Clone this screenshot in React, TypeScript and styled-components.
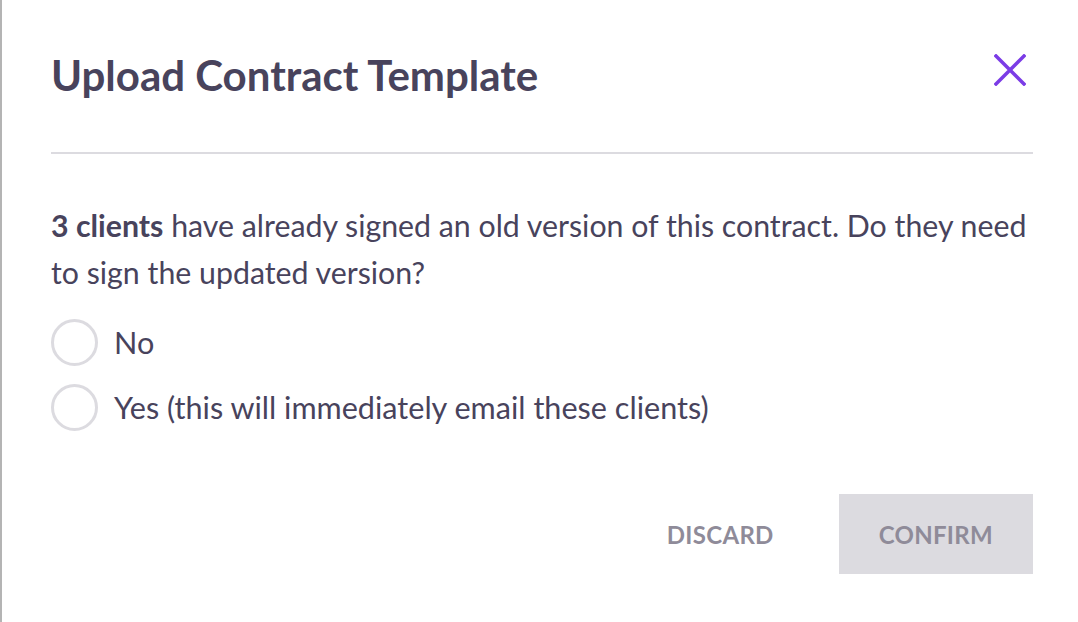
import styled, { createGlobalStyle } from "styled-components";
import { useState } from "react";

const GlobalStyle = createGlobalStyle`
  html, body {
    margin: 0;
    padding: 0;
    background: #ffffff;
  }
  body {
    font-family: Lato, "Liberation Sans", sans-serif;
  }
`;

const options = [
  { id: "no", label: "No" },
  { id: "yes", label: "Yes (this will immediately email these clients)" },
];

function App() {
  const [choice, setChoice] = useState("");

  return (
    <>
      <GlobalStyle />
      <Page>
        <Dialog>
          <Header>
            <Title>Upload Contract Template</Title>
            <CloseButton aria-label="Close">
              <svg width="32" height="32" viewBox="0 0 32 32" fill="none">
                <path
                  d="M2 2 L30 30 M30 2 L2 30"
                  stroke="#7b3ce6"
                  strokeWidth="3.5"
                  strokeLinecap="square"
                />
              </svg>
            </CloseButton>
          </Header>
          <Body>
            <Message>
              <strong>3 clients</strong> have already signed an old version of
              this contract. Do they need to sign the updated version?
            </Message>
            <RadioList>
              {options.map((o) => (
                <RadioRow key={o.id} onClick={() => setChoice(o.id)}>
                  <RadioCircle checked={choice === o.id} />
                  <RadioLabel>{o.label}</RadioLabel>
                </RadioRow>
              ))}
            </RadioList>
          </Body>
          <Footer>
            <TextButton>DISCARD</TextButton>
            <ConfirmButton disabled={!choice}>CONFIRM</ConfirmButton>
          </Footer>
        </Dialog>
      </Page>
    </>
  );
}

const Page = styled.div`
  min-height: 622px;
  border-left: 2px solid #b4b4b4;
  box-sizing: border-box;
`;

const Dialog = styled.div`
  padding: 0 45px 0 49px;
`;

const Header = styled.div`
  display: flex;
  justify-content: space-between;
  align-items: center;
  padding: 55px 0 57px;
  border-bottom: 2px solid #dcdbe0;
`;

const Title = styled.h1`
  margin: 0;
  font-size: 42px;
  line-height: 40px;
  font-weight: 700;
  color: #48435c;
`;

const CloseButton = styled.button`
  display: flex;
  align-items: center;
  justify-content: center;
  width: 40px;
  height: 40px;
  margin-right: 3px;
  margin-top: -11px;
  padding: 0;
  border: none;
  background: none;
  cursor: pointer;
`;

const Body = styled.div`
  padding-top: 48px;
`;

const Message = styled.p`
  margin: 0;
  font-size: 30.3px;
  line-height: 47px;
  color: #48435c;
  strong {
    font-weight: 700;
  }
`;

const RadioList = styled.div`
  display: flex;
  flex-direction: column;
  gap: 17px;
  margin-top: 22px;
`;

const RadioRow = styled.label`
  display: flex;
  align-items: center;
  gap: 16px;
  height: 48px;
  cursor: pointer;
`;

const RadioCircle = styled.span<{ checked: boolean }>`
  width: 47px;
  height: 47px;
  box-sizing: border-box;
  border-radius: 50%;
  border: 3px solid ${(p) => (p.checked ? "#7b3ce6" : "#dcdbe0")};
  box-shadow: ${(p) => (p.checked ? "inset 0 0 0 8px #fff" : "none")};
  background: ${(p) => (p.checked ? "#7b3ce6" : "#fff")};
  flex-shrink: 0;
`;

const RadioLabel = styled.span`
  font-size: 30.6px;
  color: #48435c;
`;

const Footer = styled.div`
  display: flex;
  justify-content: flex-end;
  align-items: center;
  gap: 25px;
  margin-top: 63px;
`;

const TextButton = styled.button`
  height: 80px;
  padding: 0 40px;
  border: none;
  background: none;
  font-family: inherit;
  font-size: 24px;
  font-weight: 700;
  letter-spacing: 0.3px;
  color: #8f8b99;
  cursor: pointer;
`;

const ConfirmButton = styled(TextButton)`
  background: #dcdbe0;
  &:disabled {
    cursor: default;
  }
`;

export default App;
